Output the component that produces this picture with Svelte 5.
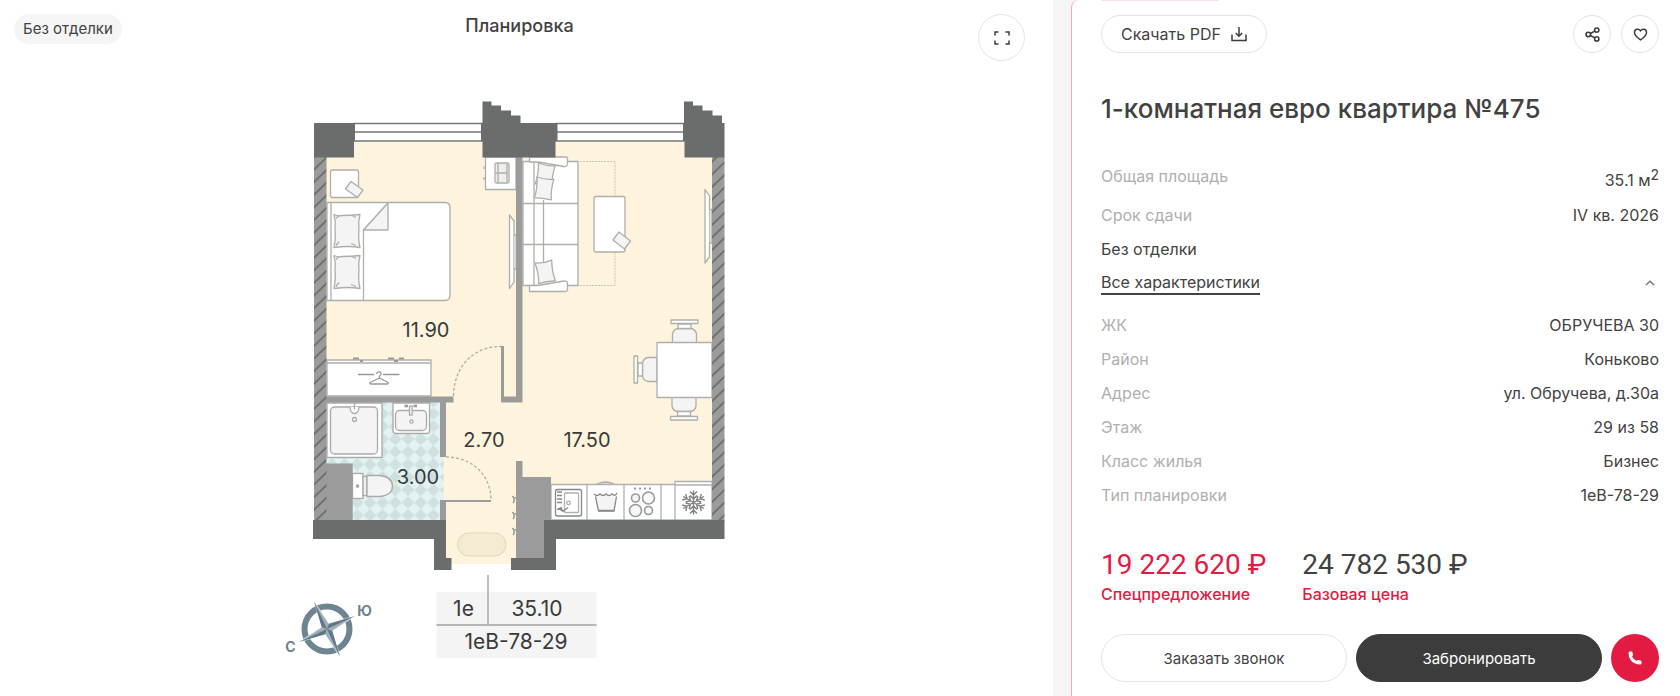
<script lang="ts">
    interface Feature {
        label: string;
        value: string;
    }

    const features: Feature[] = [
        { label: "ЖК", value: "ОБРУЧЕВА 30" },
        { label: "Район", value: "Коньково" },
        { label: "Адрес", value: "ул. Обручева, д.30а" },
        { label: "Этаж", value: "29 из 58" },
        { label: "Класс жилья", value: "Бизнес" },
        { label: "Тип планировки", value: "1еВ-78-29" },
    ];

    let expanded = $state(true);
    let liked = $state(false);

    // hooks on the hallway wall and snowflake arms on the fridge
    const hooks = [498, 514, 530];
    const arms = [0, 60, 120, 180, 240, 300];
</script>

<div class="page">
    <section class="plan">
        <header class="plan-header">
            <span class="tag">Без отделки</span>
            <h2>Планировка</h2>
            <button class="round expand" aria-label="На весь экран">
                <svg width="16" height="14" viewBox="0 0 16 14" fill="none" stroke="#3c3c3c" stroke-width="1.5">
                    <path d="M1 4.5V1h3.5M11.5 1H15v3.5M15 9.5V13h-3.5M4.5 13H1V9.5" />
                </svg>
            </button>
        </header>

        <svg class="drawing" viewBox="284 96 471 576" role="img" aria-label="План квартиры">
            <defs>
                <pattern id="hatch" width="13" height="12.6" patternUnits="userSpaceOnUse" x="314" y="157">
                    <rect width="13" height="12.6" fill="#9b9b9b" />
                    <path d="M0 12.6L13 0M-2 2L2 -2M11 14.6L15 10.6" stroke="#6b6d6c" stroke-width="1.8" />
                </pattern>
                <pattern id="tiles" width="12.7" height="12.7" patternUnits="userSpaceOnUse" x="382.6" y="502.6">
                    <rect width="12.7" height="12.7" fill="#cfe0df" />
                    <path d="M6.35 0L12.7 6.35L6.35 12.7L0 6.35Z" fill="#e2f3f4" />
                </pattern>
                <g id="chair">
                    <path d="M-12 23V14Q-11 9 -6 8.5H6Q11 9 12 14V23Z" fill="#f4f4f4" />
                    <rect x="-6.5" y="4" width="13" height="4.5" fill="#fff" />
                    <rect x="-13.5" y="0" width="27" height="3.5" fill="#fff" />
                </g>
                <g id="pillow">
                    <path d="M0 0Q4 2 8 1Q17 1 26 0Q24 7 25 15Q24 25 26 33Q15 31 0 33Q2 22 1 15Q2 7 0 0Z" fill="#f4f4f4" />
                    <path d="M2 4L5 1M18 1l4 2M22 31l-5-2M2 31l3-4" fill="none" />
                </g>
                <g id="cushion">
                    <path d="M0 0Q9 2 17 0Q15 11 17 21Q8 20 0 21Q2 11 0 0Z" fill="#f4f4f4" />
                </g>
            </defs>

            <!-- floors -->
            <path d="M326 141H713V521H516V564H446V521H326Z" fill="#fef3dd" />
            <path d="M326 402H441V457H443.5V501H441V521H326Z" fill="url(#tiles)" />

            <!-- windows -->
            <g fill="#fff" stroke="#767776" stroke-width="1.3">
                <path d="M354 123.5H483V141H354ZM354 132H483" />
                <path d="M556 123.5H684V141H556ZM556 132H684" />
            </g>

            <!-- bedroom -->
            <g stroke="#b0aeaa" stroke-width="1.3" stroke-linejoin="round">
                <rect x="330.5" y="170" width="28" height="27.5" rx="2" fill="#fff" />
                <path d="M351 181.5L363 190L357.5 197.5L345.5 189Z" fill="#f4f4f4" />
                <path d="M327 202.5H445Q450 202.5 450 208V295Q450 300.5 445 300.5H327Z" fill="#fff" />
                <path d="M331 202.5V300.5M363.5 300.5V230L388 203" fill="none" />
                <path d="M363.5 230H388V203Z" fill="#f4f4f4" />
                <use href="#pillow" x="334" y="214.5" />
                <use href="#pillow" x="334" y="255.5" />
                <path d="M485.5 157V189.5H516V157Z" fill="#fff" />
                <rect x="495" y="163" width="14" height="20" rx="1.5" fill="#eee" />
                <path d="M498 163V183M495 173H507M507 164V182M484 166.5V169M484 177V180" fill="none" />
                <path d="M509.5 215L514 221V282L509.5 288.5Z" fill="#fff" />
                <path d="M514 235H516.5V269H514" fill="#ddd" />
                <path d="M327 360H431V396H327ZM327 363H431" fill="#fff" />
                <path d="M358 374.5H374M383 374.5H399.5" stroke="#999" />
                <path d="M376.5 374Q377 371.5 380 372Q382.5 374 379.5 376V378L370 382.5Q369 383.5 371 384H387Q389 383.5 388 382.5L379.5 378" fill="none" stroke="#999" />
                <path d="M353 358.5H359M388 358.5H394M399 358.5H404M360 361h3M394 361h4" stroke="#999" stroke-width="2" />
            </g>

            <!-- bathroom fixtures -->
            <g stroke="#aaa" stroke-width="1.3">
                <path d="M327 403H382V457.5H327Z" fill="#fff" />
                <rect x="330.5" y="407" width="47" height="47" rx="4" fill="#f4f4f4" />
                <path d="M350 407Q350.5 413.5 354.5 413.5Q358.5 413.5 359 407M354.5 403V409" fill="#fff" />
                <circle cx="354.5" cy="419.5" r="2" fill="#fff" />
                <path d="M393 403H429.5V431Q429.5 433.5 427 433.5H396Q393 433.5 393 431Z" fill="#fff" />
                <rect x="395.5" y="410.5" width="31" height="20" rx="4" fill="#f4f4f4" />
                <path d="M404.5 406H408M413.5 406H417" stroke-width="2.5" stroke="#999" />
                <rect x="409.5" y="406" width="2.6" height="9" fill="#fff" />
                <circle cx="411.5" cy="421.5" r="1.6" fill="#fff" />
                <rect x="352.5" y="473.5" width="10.5" height="25" fill="#fff" />
                <rect x="363" y="476.5" width="4" height="19" fill="#eee" />
                <path d="M367 475.5H380Q392.5 477 392.5 486Q392.5 495 380 496.5H367Z" fill="#f4f4f4" />
                <circle cx="357.5" cy="486" r="1.2" fill="#999" />
            </g>

            <!-- living room -->
            <g stroke="#b0aeaa" stroke-width="1.3" stroke-linejoin="round">
                <path d="M577 161.5H615V285.5H577" fill="none" stroke="#c9c4b8" stroke-width="1" stroke-dasharray="2 1" />
                <path d="M523 161.5H578V285.5H523Z" fill="#fff" />
                <path d="M523 203.5H578M523 244.5H578M534 161.5V285.5M543.5 200V262" fill="none" />
                <path d="M529.5 157H566Q568 157 567.5 160V164Q567 167 564 166.5L538 162H529.5Z" fill="#fff" />
                <path d="M529.5 291.5H565Q568 291.5 567.5 288V283Q567 280.5 564 281L538 285.5H529.5Z" fill="#fff" />
                <use href="#cushion" transform="translate(538.5 163) rotate(9)" />
                <use href="#cushion" transform="translate(537 177) rotate(7)" />
                <use href="#cushion" transform="translate(535 263) rotate(-10)" />
                <rect x="594" y="196.5" width="31" height="55.5" rx="2" fill="#fff" />
                <path d="M619 232L630.5 241L624.5 249L613 240Z" fill="#f4f4f4" />
                <path d="M705 189.5L709.5 196V257L705 263Z" fill="#fff" />
                <path d="M709.5 209.5H712V243H709.5" fill="#ddd" />
                <use href="#chair" transform="translate(684.5 320)" />
                <use href="#chair" transform="translate(684 420) rotate(180)" />
                <use href="#chair" transform="translate(634 369.5) rotate(-90)" />
                <rect x="657" y="342.5" width="55" height="55" fill="#fff" />
            </g>

            <!-- kitchen -->
            <g stroke="#b0b0b0" stroke-width="1.3" fill="none">
                <path d="M597 484Q606 480 614 484" fill="#ddd" />
                <path d="M551 484.5H712V520H551ZM587 484.5V520M624 484.5V520M661 484.5V520" fill="#fff" />
                <path d="M675 481.5H712V520H675ZM675 485H712" fill="#fff" />
                <rect x="555.5" y="489.5" width="26" height="26.5" rx="2" stroke="#888" />
                <rect x="564.5" y="493" width="14" height="19.5" rx="1" />
                <path d="M557 492h5M557 495.5h5M557 499h5M557 502.5h5M557 509.5l4-2l2 4l5-4M559 508l3 3" stroke="#888" />
                <circle cx="568.5" cy="503" r="1.8" />
                <path d="M595.5 496.5L598.5 511H614L616.5 496.5" fill="#f4f4f4" stroke="#888" />
                <path d="M594 494Q597 497 600 494Q603 497 606 494Q609 497 612 494Q615 497 617 493M598.5 510.5H614" stroke="#888" />
                <g stroke="#999" stroke-width="1.6" fill="#f7f7f7">
                    <circle cx="635.5" cy="498" r="4" />
                    <circle cx="648.5" cy="498" r="6" />
                    <circle cx="635.5" cy="510.5" r="6" />
                    <circle cx="648.5" cy="510.5" r="4" />
                </g>
                <path d="M634 488.5H651" stroke="#999" stroke-dasharray="2 3" stroke-width="2" />
                <g stroke="#808080" stroke-width="1.4" transform="translate(693.5 502.5)">
                    {#each arms as angle (angle)}
                        <path d="M0 0V-12M-3.5 -11L0 -7.5L3.5 -11M-3.5 -7L0 -3.5L3.5 -7" transform="rotate({angle})" />
                    {/each}
                </g>
            </g>

            <!-- hallway -->
            <rect x="457.5" y="533" width="48.5" height="23" rx="11.5" fill="#f4ebd2" stroke="#ddd6c2" />
            {#each hooks as y (y)}
                <path d="M516 {y}h-2l-1.5 -2m1.5 2v4l-1 1" fill="none" stroke="#999" stroke-width="1.5" />
            {/each}

            <!-- partitions -->
            <g fill="#9b9b9b">
                <path d="M516 157H522.5V402.5H501V346H504V396.5H516Z" />
                <path d="M326 396.5H453.5V402.5H446V457H440V402.5H326Z" />
                <path d="M440 500H491V502H446V521H440Z" />
                <path d="M326 463.5H352.7V521H326Z" />
                <path d="M516 461H522.5V477H551V521H544V559H516Z" />
            </g>
            <g fill="none" stroke="#b1ada4" stroke-width="1.3" stroke-dasharray="3 2">
                <path d="M453.5 396C454 365 475 346 501 346.5" />
                <path d="M446 457C473 457 491 476 491 500" />
            </g>

            <!-- outer walls -->
            <path d="M314 157H326.5V521H314ZM712 157H724.5V521H712Z" fill="url(#hatch)" />
            <g fill="#6b6d6c">
                <path d="M314 123H355V141H354V157.5H314Z" />
                <path d="M482.5 101.5H491.5V105.5H501V110.5H511V115.5H520.5V123H557.5V141H555.5V157.5H482.5V141H481V123H482.5Z" />
                <path d="M684 101.5H693V105.5H702.5V110.5H712.5V115.5H722V123H724.5V157.5H684.5V141H683V123H684Z" />
                <path d="M313 520H446V558H451.5V570H434V539H313Z" />
                <path d="M544 520H724.5V539H556V570H511V558H544Z" />
            </g>

            <g class="label room">
                <text x="426" y="337">11.90</text>
                <text x="484" y="447">2.70</text>
                <text x="587" y="447">17.50</text>
                <text x="418" y="484">3.00</text>
            </g>

            <!-- plate with the flat type -->
            <path d="M436.5 592H596.5V658H436.5Z" fill="#f4f4f4" />
            <path d="M488 575V625M436.5 625H596.5" stroke="#a3a3a3" stroke-width="1.4" />
            <g class="label">
                <text x="463.5" y="616">1е</text>
                <text x="537" y="616">35.10</text>
                <text x="516" y="649">1еВ-78-29</text>
            </g>

            <!-- compass -->
            <circle cx="327" cy="629" r="22.5" fill="none" stroke="#6e8491" stroke-width="6" />
            <g transform="translate(327 629) rotate(-25)">
                <path d="M0 -31L4 -4L31 0L4 4L0 31L-4 4L-31 0L-4 -4Z" fill="#9eb0ba" stroke="#fff" stroke-width=".5" />
                <path d="M0 -31V0L-4 -4ZM31 0H0L4 -4ZM0 31V0L4 4ZM-31 0H0L-4 4Z" fill="#607886" />
            </g>
            <g class="side">
                <text x="364.5" y="616">Ю</text>
                <text x="290.5" y="652">С</text>
            </g>
        </svg>
    </section>

    <aside class="info">
        <div class="promo-edge"></div>
        <div class="toolbar">
            <button class="pdf">
                Скачать PDF
                <svg width="16" height="15" viewBox="0 0 16 15" fill="none" stroke="#3c3c3c" stroke-width="1.5">
                    <path d="M1 7.5V13.5H15V7.5M8 0V9M4.8 6L8 9.2L11.2 6" />
                </svg>
            </button>
            <button class="round small" aria-label="Поделиться">
                <svg width="15" height="15" viewBox="0 0 16 16" fill="none" stroke="#3c3c3c" stroke-width="1.7">
                    <circle cx="3.5" cy="8" r="2.4" />
                    <circle cx="12.5" cy="3.3" r="2.3" />
                    <circle cx="12.5" cy="12.7" r="2.3" />
                    <path d="M5.7 6.9L10.5 4.4M5.7 9.1L10.5 11.6" />
                </svg>
            </button>
            <button class="round small" aria-label="В избранное" aria-pressed={liked} onclick={() => (liked = !liked)}>
                <svg width="15" height="13" viewBox="0 0 16 14" fill={liked ? "#e31b42" : "none"} stroke="#3c3c3c" stroke-width="1.6">
                    <path d="M8 12.8C5 10.7 1.5 8 1.5 4.8C1.5 1 6 .2 8 3C10 .2 14.5 1 14.5 4.8C14.5 8 11 10.7 8 12.8Z" />
                </svg>
            </button>
        </div>

        <h1>1-комнатная евро квартира №475</h1>

        <dl class="summary">
            <div class="row area-row"><dt>Общая площадь</dt><dd>35.1 м<sup>2</sup></dd></div>
            <div class="row"><dt>Срок сдачи</dt><dd>IV кв. 2026</dd></div>
        </dl>
        <p class="finish">Без отделки</p>
        <button class="toggle" aria-expanded={expanded} onclick={() => (expanded = !expanded)}>
            <span>Все характеристики</span>
            <svg class:closed={!expanded} width="10" height="6" viewBox="0 0 10 6" fill="none" stroke="#777" stroke-width="1.5">
                <path d="M1 5L5 1.2L9 5" />
            </svg>
        </button>
        {#if expanded}
            <dl class="features">
                {#each features as feature (feature.label)}
                    <div class="row"><dt>{feature.label}</dt><dd>{feature.value}</dd></div>
                {/each}
            </dl>
        {/if}

        <div class="prices">
            <div class="price special"><strong>19 222 620 ₽</strong><span>Спецпредложение</span></div>
            <div class="price"><strong>24 782 530 ₽</strong><span>Базовая цена</span></div>
        </div>

        <div class="actions">
            <button class="call">Заказать звонок</button>
            <button class="book">Забронировать</button>
            <button class="phone" aria-label="Позвонить">
                <svg width="14" height="14" viewBox="0 0 14 14" fill="#fff">
                    <path d="M.5 1.5Q1 .5 2 .5H3.5Q4.3 .5 4.5 1.5L5 4Q5 4.7 4 5.5Q5.5 8.5 8.5 10Q9.3 9 10 9L12.5 9.5Q13.5 9.8 13.5 10.5V12.5Q13.3 13.5 12.3 13.5Q6.5 13.5 3 9.5Q.2 6 .5 1.5Z" />
                </svg>
            </button>
        </div>
    </aside>
</div>

<style>
    :global(body) {
        background: #f5f5f5;
    }

    .page {
        display: flex;
        gap: 18px;
        min-height: 100vh;
        overflow: hidden;
        font-family: Inter, "Noto Sans", sans-serif;
        font-size: 16px;
        color: #424242;
    }

    button {
        font: inherit;
        color: inherit;
        background: #fff;
        border: 1px solid #e4e4e4;
        padding: 0;
        cursor: pointer;
    }

    .plan {
        flex: 1;
        box-sizing: border-box;
        padding: 14px 28px 0 14px;
        background: #fff;
    }

    .plan-header {
        display: grid;
        grid-template-columns: 1fr auto 1fr;
        align-items: start;
    }

    .tag {
        justify-self: start;
        padding: 0 9px;
        border-radius: 15px;
        background: #f5f5f5;
        font-size: 15px;
        line-height: 30px;
    }

    h2 {
        margin: 0;
        font-size: 18px;
        font-weight: 500;
        line-height: 24px;
    }

    .round {
        display: flex;
        align-items: center;
        justify-content: center;
        border-radius: 50%;
    }

    .expand {
        justify-self: end;
        width: 47px;
        height: 47px;
    }

    .drawing {
        display: block;
        width: 471px;
        max-width: 100%;
        margin: 35px auto 0;
    }

    .label {
        font-size: 21px;
        fill: #3a3a3a;
        text-anchor: middle;
    }

    .room {
        font-size: 20px;
    }

    .side {
        font-size: 14px;
        font-weight: 700;
        fill: #6e8491;
        text-anchor: middle;
    }

    .info {
        box-sizing: border-box;
        width: 609px;
        padding: 0 21px 14px 29px;
        background: #fff;
        border-left: 1px solid #f5a9b5;
        border-top-left-radius: 8px;
    }

    /* lower edge of the promo badge scrolled out of view */
    .promo-edge {
        width: 118px;
        height: 1px;
        margin-bottom: 14px;
        background: #fbdde2;
    }

    .toolbar {
        display: flex;
        gap: 10px;
    }

    .pdf {
        display: flex;
        align-items: center;
        gap: 10px;
        height: 38px;
        margin-right: auto;
        padding: 0 19px;
        border-radius: 19px;
    }

    .small {
        width: 38px;
        height: 38px;
    }

    h1 {
        margin: 38px 0 32px;
        font-size: 26px;
        font-weight: 500;
        line-height: 36px;
    }

    dl,
    p {
        margin: 0;
    }

    .row {
        display: flex;
        justify-content: space-between;
        line-height: 34px;
    }

    .area-row {
        align-items: flex-start;
        height: 39px;
    }

    .area-row dd {
        padding-top: 4px;
    }

    dt {
        color: #b0b0b0;
    }

    dd {
        margin: 0;
    }

    sup {
        font-size: 14px;
        line-height: 0;
    }

    .finish {
        line-height: 34px;
    }

    .toggle {
        display: flex;
        align-items: center;
        justify-content: space-between;
        width: 100%;
        padding: 5px 4px 5px 0;
        border: 0;
    }

    .toggle span {
        border-bottom: 2px solid #424242;
        line-height: 22px;
    }

    .closed {
        transform: rotate(180deg);
    }

    .features {
        margin-top: 8px;
    }

    .prices {
        display: flex;
        gap: 36px;
        margin-top: 36px;
    }

    .price strong,
    .price span {
        display: block;
    }

    .price strong {
        font-family: Roboto, "Noto Sans", sans-serif;
        font-size: 28px;
        font-weight: 400;
        line-height: 34px;
    }

    .price span {
        color: #e31b42;
        font-weight: 500;
        line-height: 24px;
    }

    .special strong {
        color: #e31b42;
    }

    .actions {
        display: flex;
        gap: 9px;
        margin-top: 28px;
    }

    .call,
    .book {
        flex: 1;
        height: 48px;
        border-radius: 24px;
        font-size: 15px;
    }

    .book {
        color: #fff;
        background: #3c3c3c;
        border-color: #3c3c3c;
    }

    .phone {
        display: flex;
        align-items: center;
        justify-content: center;
        width: 48px;
        height: 48px;
        border: 0;
        border-radius: 50%;
        background: #e31b42;
    }
</style>
